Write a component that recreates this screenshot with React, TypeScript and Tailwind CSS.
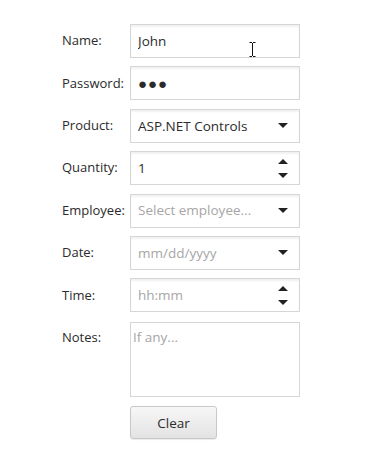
import React from 'react'

const font = { fontFamily: '"Open Sans", "Noto Sans", sans-serif' }

function Down({ className = '' }: { className?: string }) {
  return (
    <svg width="10" height="5" viewBox="0 0 10 5" className={className}>
      <path d="M0 0h10L5 5z" fill="#222" />
    </svg>
  )
}

function Up({ className = '' }: { className?: string }) {
  return (
    <svg width="10" height="5" viewBox="0 0 10 5" className={className}>
      <path d="M0 5h10L5 0z" fill="#222" />
    </svg>
  )
}

function Box({ children, muted, right }: { children: React.ReactNode; muted?: boolean; right?: React.ReactNode }) {
  return (
    <div className="relative flex h-[34px] items-center border border-[#d6d6d6] bg-white pl-[7px] pr-[11px] shadow-[inset_0_2px_2px_rgba(0,0,0,0.06)]">
      <span className={'flex-1 truncate text-[13.5px] ' + (muted ? 'text-[#a6a6a6]' : 'text-[#2b2b2b]')}>{children}</span>
      {right}
    </div>
  )
}

const spin = (
  <div className="flex flex-col gap-[9px]">
    <Up />
    <Down />
  </div>
)

export default function App() {
  const rows: [string, React.ReactNode][] = [
    [
      'Name:',
      <div className="relative">
        <Box>John</Box>
        {/* mouse pointer over the field */}
        <svg width="7" height="15" viewBox="0 0 7 15" className="absolute left-[119px] top-[18px]">
          <path d="M0.5 0.5h2.5M4 0.5h2.5M3.5 1v13M0.5 14.5h2.5M4 14.5h2.5" stroke="#111" strokeWidth="1" fill="none" />
        </svg>
      </div>,
    ],
    ['Password:', <Box><span className="tracking-[1px] text-[15px]">●●●</span></Box>],
    ['Product:', <Box right={<Down />}>ASP.NET Controls</Box>],
    ['Quantity:', <Box right={spin}>1</Box>],
    ['Employee:', <Box muted right={<Down />}>Select employee...</Box>],
    ['Date:', <Box muted right={<Down />}>mm/dd/yyyy</Box>],
    ['Time:', <Box muted right={spin}>hh:mm</Box>],
  ]
  return (
    <div className="min-h-[452px] w-[372px] bg-white pl-[62px] pt-[24px]" style={font}>
      <div className="grid grid-cols-[68px_170px] gap-y-[8.4px] text-[13px] text-[#2b2b2b]">
        {rows.map(([label, field]) => (
          <React.Fragment key={label}>
            <div className="flex items-center">{label}</div>
            {field}
          </React.Fragment>
        ))}
        <div className="pt-[7px]">Notes:</div>
        <div className="mt-[1px] h-[75px] border border-[#d6d6d6] bg-white px-[2px] pt-[4px] text-[13.5px] text-[#a6a6a6]">If any...</div>
        <div />
        <button className="mt-[1px] h-[33px] w-[87px] rounded-[3px] border border-[#c8c8c8] bg-gradient-to-b from-[#f7f7f7] to-[#e3e3e3] text-[13.5px] text-[#2b2b2b] shadow-[0_1px_1px_rgba(0,0,0,0.08)]">
          Clear
        </button>
      </div>
    </div>
  )
}
